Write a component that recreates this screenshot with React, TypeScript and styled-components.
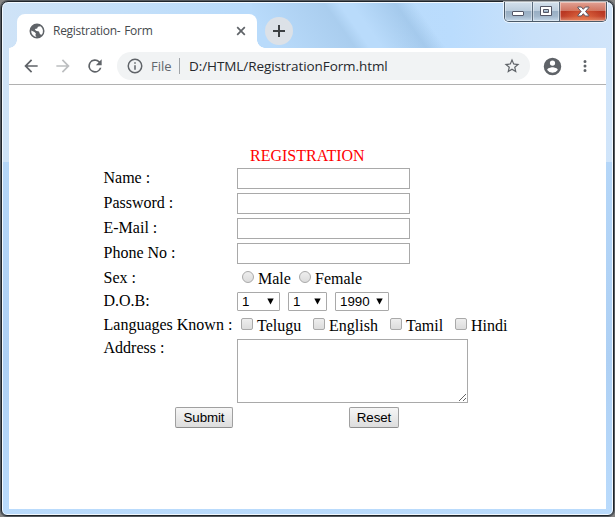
import React from "react";
import styled, { createGlobalStyle, css } from "styled-components";

const GlobalStyle = createGlobalStyle`
  * { box-sizing: border-box; }
  html, body { margin: 0; padding: 0; }
  body { width: 615px; height: 517px; overflow: hidden; background: #858585; }
`;

const chromeFont = css`
  font-family: "Open Sans", "Noto Sans", sans-serif;
`;

const WindowFrame = styled.div`
  width: 613px;
  height: 515px;
  margin: 1px 0 0 1px;
  border: 1px solid #1f252b;
  border-radius: 7px 7px 6px 6px;
  box-shadow: inset 0 0 0 1px #f3f9ff, 0 0 0 1px #55595e;
  background:
    linear-gradient(55deg, transparent 20px, rgba(157, 194, 228, 0.55) 86px, transparent 98px, transparent 108px, rgba(151, 190, 226, 0.6) 144px, transparent 160px) 250px 0 / 230px 48px no-repeat,
    linear-gradient(90deg, #cfe3f7 0, #c3dff9 130px, #b9dbfb 240px, #b9dbfb 390px, #badcfd 450px, #c9e1fa 530px, #d1e5fa 100%) 0 0 / 100% 160px no-repeat,
    linear-gradient(180deg, #badbfb, #aed0f4 70%, #badbfc);
  display: flex;
  flex-direction: column;
  padding: 1px 7px 6px;
`;

const TitleBar = styled.header`
  height: 45px;
  flex: none;
  display: flex;
  align-items: flex-start;
  padding-left: 8px;
`;

const Tab = styled.div`
  position: relative;
  width: 240px;
  height: 34px;
  margin-top: 11px;
  padding: 0 10px 0 11px;
  border-radius: 8px 8px 0 0;
  background: #fff;
  display: flex;
  align-items: center;
  &::before,
  &::after {
    content: "";
    position: absolute;
    bottom: 0;
    width: 8px;
    height: 8px;
  }
  &::before {
    left: -8px;
    background: radial-gradient(circle at 0 0, transparent 7.5px, #fff 8px);
  }
  &::after {
    right: -8px;
    background: radial-gradient(circle at 100% 0, transparent 7.5px, #fff 8px);
  }
`;

const TabTitle = styled.span`
  ${chromeFont}
  flex: 1;
  margin-left: 7px;
  font-size: 12px;
  line-height: 16px;
  letter-spacing: -0.28px;
  word-spacing: 1px;
  color: #45494d;
  white-space: nowrap;
`;

const NewTab = styled.div`
  width: 28px;
  height: 28px;
  margin: 14px 0 0 8px;
  border-radius: 50%;
  background: #dce1e7;
  display: grid;
  place-items: center;
`;

const Controls = styled.div`
  display: flex;
  width: 103px;
  height: 20px;
  margin: -1px -1px 0 auto;
  border: 1px solid #4b5a69;
  border-top: 0;
  border-radius: 0 0 5px 5px;
  box-shadow: 0 0 0 1px rgba(255, 255, 255, 0.65);
  overflow: hidden;
`;

const Control = styled.div<{ $width: number; $divided?: boolean; $close?: boolean }>`
  width: ${(p) => p.$width}px;
  display: grid;
  place-items: center;
  border-left: ${(p) => (p.$divided ? "1px solid #5c6d7e" : "0")};
  box-shadow: inset 0 0 0 1px rgba(255, 255, 255, 0.4);
  background: ${(p) =>
    p.$close
      ? "radial-gradient(ellipse at 50% 100%, rgba(240,125,75,.75), transparent 65%), linear-gradient(#e2a193 0, #ce7563 46%, #b83621 48%, #bf4029 75%, #d98970)"
      : "linear-gradient(#d3e0ec 0, #bccddd 46%, #98aec3 48%, #a2b7cb 75%, #c5d8e9)"};
`;

const Toolbar = styled.div`
  height: 37px;
  flex: none;
  display: flex;
  align-items: center;
  padding: 0 12px;
  background: #fff;
  border-bottom: 1px solid #b1b1b1;
`;

const Nav = styled.div`
  display: flex;
  flex: none;
  gap: 12px;
  width: 96px;
`;

const AddressBar = styled.div`
  ${chromeFont}
  width: 413px;
  height: 28px;
  flex: none;
  border-radius: 14px;
  background: #f1f3f4;
  display: flex;
  align-items: center;
  padding: 0 9px;
  font-size: 13.5px;
  line-height: 20px;
  color: #25282c;
`;

const Scheme = styled.span`
  width: 28px;
  margin-left: 7px;
  color: #62676c;
  font-size: 13px;
  line-height: 16px;
`;

const Separator = styled.span`
  width: 1px;
  height: 16px;
  background: #a0a4a8;
  margin-right: 9px;
`;

const Url = styled.span`
  flex: 1;
  letter-spacing: -0.08px;
  white-space: nowrap;
`;

const Menus = styled.div`
  display: flex;
  flex: none;
  align-items: center;
  gap: 13px;
  margin-left: 12px;
`;

const Page = styled.main`
  flex: 1;
  padding: 62px 0 0 94px;
  background: #fff;
  color: #000;
  font: 16px/18px "Liberation Serif", serif;
`;

const Heading = styled.h1`
  height: 19px;
  margin: 0 0 0 147px;
  font: inherit;
  color: #f00;
`;

const FormGrid = styled.form`
  display: grid;
  grid-template-columns: 134px 1fr;
  grid-template-rows: repeat(4, 25px) 24px 23px 24px 68px;
`;

const Label = styled.label<{ $top?: number }>`
  padding: ${(p) => p.$top ?? 3}px 0 0 0.5px;
  white-space: nowrap;
`;

const Cell = styled.div<{ $gap?: number }>`
  display: flex;
  align-items: center;
  gap: ${(p) => p.$gap ?? 0}px;
`;

const TextInput = styled.input`
  width: 173px;
  height: 21px;
  border: 1px solid #a9a9a9;
  background: #fff;
  padding: 1px;
  outline: none;
`;

const Choice = styled.label<{ $width: number; $indent: number }>`
  width: ${(p) => p.$width}px;
  padding-left: ${(p) => p.$indent}px;
  display: flex;
  align-items: center;
  white-space: nowrap;
`;

const Mark = styled.input`
  appearance: none;
  width: 12px;
  height: 12px;
  margin: 0 4px 2px 0;
  border: 1px solid #a9a9a9;
  border-radius: ${(p) => (p.type === "radio" ? "50%" : "2px")};
  background: linear-gradient(#eeeeee, #dcdcdc);
`;

const ChoiceText = styled.span`
  padding-top: 2px;
`;

const SelectBox = styled.div<{ $width: number }>`
  width: ${(p) => p.$width}px;
  height: 19px;
  border: 1px solid #a9a9a9;
  border-radius: 1px;
  padding: 0 5px 0 4px;
  display: flex;
  align-items: center;
  justify-content: space-between;
  font: 13.333px/17px "Liberation Sans", sans-serif;
`;

const TextArea = styled.textarea`
  display: block;
  width: 231px;
  height: 64px;
  margin-top: 2px;
  border: 1px solid #a9a9a9;
  padding: 2px;
  outline: none;
  resize: both;
`;

const Actions = styled.div`
  display: flex;
  gap: 116px;
  padding: 2px 0 0 72px;
`;

const Button = styled.button<{ $width: number }>`
  width: ${(p) => p.$width}px;
  height: 21px;
  padding: 0;
  border: 1px solid #a0a0a0;
  border-bottom-color: #8e8e8e;
  border-radius: 2px;
  background: linear-gradient(#f6f6f6, #dddddd);
  font: 13.333px/17px "Liberation Sans", sans-serif;
  letter-spacing: -0.1px;
  color: #000;
`;

const Icon = ({ d, size = 20, color = "#5f6368" }: { d: string; size?: number; color?: string }) => (
  <svg width={size} height={size} viewBox="0 0 24 24" fill={color}>
    <path d={d} />
  </svg>
);

const paths = {
  globe:
    "M12 2a10 10 0 1 0 0 20 10 10 0 0 0 0-20zM4.3 11.2L8.6 13.2l2 2.2-.8 2 1.4 2.5A8 8 0 0 1 4.3 11.2zm13.9 5.8l-2.2-.8-1.4-3.4-4-1.2-1.6-2.2 3.2-.8 1-2.2 3.2-.6.2-.3A8 8 0 0 1 18.2 17z",
  back: "M20 11H7.83l5.59-5.59L12 4l-8 8 8 8 1.41-1.41L7.83 13H20v-2z",
  forward: "M12 4l-1.41 1.41L16.17 11H4v2h12.17l-5.58 5.59L12 20l8-8z",
  reload:
    "M17.65 6.35A8 8 0 1 0 19.73 14h-2.08A6 6 0 1 1 12 6c1.66 0 3.14.69 4.22 1.78L13 11h7V4l-2.35 2.35z",
  info: "M11 7h2v2h-2zm0 4h2v6h-2zm1-9a10 10 0 1 0 0 20 10 10 0 0 0 0-20zm0 18a8 8 0 1 1 0-16 8 8 0 0 1 0 16z",
  star: "M22 9.24l-7.19-.62L12 2 9.19 8.63 2 9.24l5.46 4.73L5.82 21 12 17.27 18.18 21l-1.63-7.03L22 9.24zM12 15.4l-3.76 2.27 1-4.28-3.32-2.88 4.38-.38L12 6.1l1.71 4.04 4.38.38-3.32 2.88 1 4.28L12 15.4z",
  profile:
    "M12 2a10 10 0 1 0 0 20 10 10 0 0 0 0-20zm0 3a3 3 0 1 1 0 6 3 3 0 0 1 0-6zm0 14.2a7.2 7.2 0 0 1-6-3.22c.03-1.99 4-3.08 6-3.08s5.97 1.09 6 3.08a7.2 7.2 0 0 1-6 3.22z",
  more: "M12 8a2 2 0 1 0 0-4 2 2 0 0 0 0 4zm0 2a2 2 0 1 0 0 4 2 2 0 0 0 0-4zm0 6a2 2 0 1 0 0 4 2 2 0 0 0 0-4z",
};

const Select = ({ value, width }: { value: string; width: number }) => (
  <SelectBox $width={width}>
    <span>{value}</span>
    <svg width="7" height="7" viewBox="0 0 7 7">
      <path d="M0.3 0.5h6.4L3.5 6.5z" fill="#000" />
    </svg>
  </SelectBox>
);

const fields = ["Name :", "Password :", "E-Mail :", "Phone No :"];

const languages = [
  { name: "Telugu", width: 72 },
  { name: "English", width: 77 },
  { name: "Tamil", width: 65 },
  { name: "Hindi", width: 60 },
];

export default function App() {
  return (
    <>
      <GlobalStyle />
      <WindowFrame>
        <TitleBar>
          <Tab>
            <Icon d={paths.globe} size={18} />
            <TabTitle>Registration- Form</TabTitle>
            <svg width="12" height="12" viewBox="0 0 12 12" stroke="#5f6368" strokeWidth="1.7">
              <path d="M2.2 2.2l7.6 7.6M9.8 2.2L2.2 9.8" />
            </svg>
          </Tab>
          <NewTab>
            <svg width="12" height="12" viewBox="0 0 12 12" stroke="#3c4043" strokeWidth="2">
              <path d="M6 0v12M0 6h12" />
            </svg>
          </NewTab>
          <Controls>
            <Control $width={27}>
              <svg width="13" height="13" viewBox="0 0 13 13">
                <rect x="0.5" y="6.5" width="11" height="4" rx="0.5" fill="#fff" stroke="#535666" />
              </svg>
            </Control>
            <Control $width={27} $divided>
              <svg width="13" height="11" viewBox="0 0 13 11">
                <path d="M.5 .5h11v9H.5zM3.5 3.5v3h5v-3z" fill="#fff" fillRule="evenodd" stroke="#535666" />
              </svg>
            </Control>
            <Control $width={47} $divided $close>
              <svg width="13" height="11" viewBox="0 0 13 11">
                <path
                  d="M.8 1h3.5l2 2.3L8.3 1h3.5v.7L8.5 5.5l3.3 3.8v.7H8.3l-2-2.3-2 2.3H.8v-.7l3.3-3.8L.8 1.7z"
                  fill="#fff"
                  stroke="#59525e"
                />
              </svg>
            </Control>
          </Controls>
        </TitleBar>
        <Toolbar>
          <Nav>
            <Icon d={paths.back} />
            <Icon d={paths.forward} color="#bcbec0" />
            <Icon d={paths.reload} />
          </Nav>
          <AddressBar>
            <Icon d={paths.info} size={18} />
            <Scheme>File</Scheme>
            <Separator />
            <Url>D:/HTML/RegistrationForm.html</Url>
            <Icon d={paths.star} size={18} />
          </AddressBar>
          <Menus>
            <Icon d={paths.profile} size={21} />
            <Icon d={paths.more} size={18} />
          </Menus>
        </Toolbar>
        <Page>
          <Heading>REGISTRATION</Heading>
          <FormGrid>
            {fields.map((name) => (
              <React.Fragment key={name}>
                <Label>{name}</Label>
                <Cell>
                  <TextInput aria-label={name} />
                </Cell>
              </React.Fragment>
            ))}
            <Label>Sex :</Label>
            <Cell>
              <Choice $width={57} $indent={5}>
                <Mark type="radio" name="sex" />
                <ChoiceText>Male</ChoiceText>
              </Choice>
              <Choice $width={80} $indent={5}>
                <Mark type="radio" name="sex" />
                <ChoiceText>Female</ChoiceText>
              </Choice>
            </Cell>
            <Label $top={2}>D.O.B:</Label>
            <Cell $gap={8}>
              <Select value="1" width={43} />
              <Select value="1" width={39} />
              <Select value="1990" width={54} />
            </Cell>
            <Label>Languages Known :</Label>
            <Cell>
              {languages.map(({ name, width }) => (
                <Choice key={name} $width={width} $indent={4}>
                  <Mark type="checkbox" />
                  <ChoiceText>{name}</ChoiceText>
                </Choice>
              ))}
            </Cell>
            <Label $top={2}>Address :</Label>
            <div>
              <TextArea aria-label="Address" />
            </div>
          </FormGrid>
          <Actions>
            <Button type="button" $width={58}>Submit</Button>
            <Button type="button" $width={50}>Reset</Button>
          </Actions>
        </Page>
      </WindowFrame>
    </>
  );
}
